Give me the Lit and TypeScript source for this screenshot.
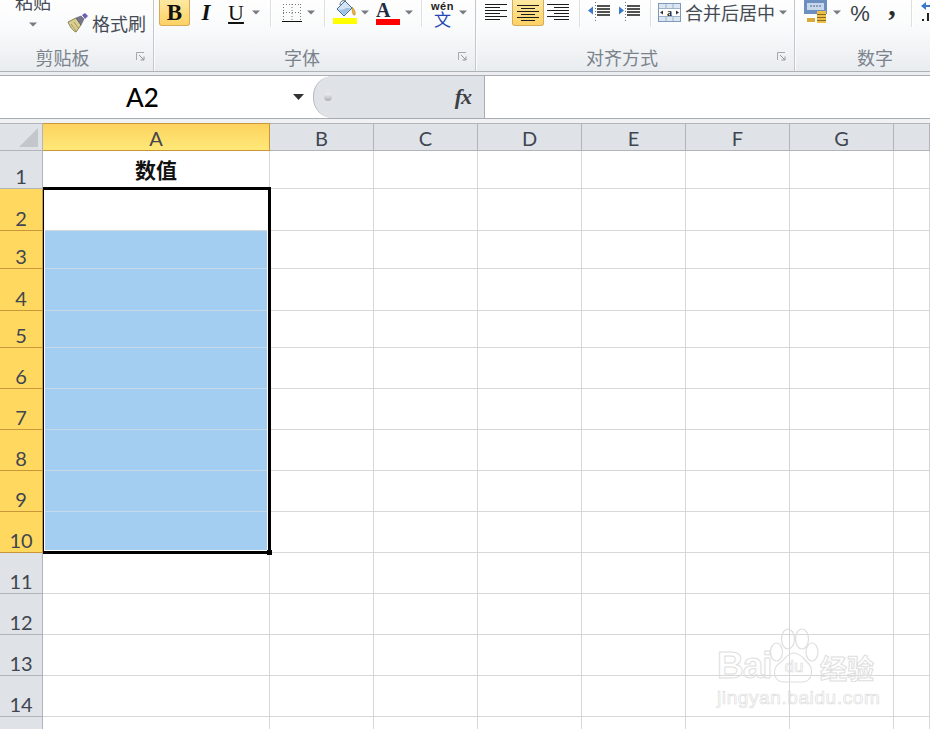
import { LitElement, html, css, svg } from "lit";
import { customElement } from "lit/decorators.js";

const COLS = [{ n: "A", w: 227 }, { n: "B", w: 104 }, { n: "C", w: 104 }, { n: "D", w: 104 }, { n: "E", w: 104 }, { n: "F", w: 104 }, { n: "G", w: 104 }, { n: "", w: 36 }];
const ROWS = [38, 42, 38, 42, 37, 41, 41, 41, 41, 41, 41, 41, 41, 41, 14];

const caret = html`<svg class="caret" width="8" height="5" viewBox="0 0 8 5"><path d="M0 .5h8L4 4.500z" fill="#767b82"/></svg>`;
const launcher = html`<svg class="launcher" width="10" height="10" viewBox="0 0 10 10"><path d="M.5 8V.5H8" fill="none" stroke="#a3a8ae"/><path d="M3 3l5 5M8 4.500V8H4.500" fill="none" stroke="#8f959c" stroke-width="1"/></svg>`;

const lines = (xs: [number, number][]) => svg`${xs.map(([a, b], i) => svg`<rect x="${a}" y="${2 + i * 3}" width="${b - a}" height="1" fill="#1c1c1c"/>`)}`;

const indent = (dir: number) => html`<svg width="23" height="22" viewBox="0 0 23 22"><path d="M9 5h13M9 8h13M9 11h13M9 14h13" stroke="#1a1a1a" stroke-width="1.300"/><path d="M7.500 1v19" stroke="#777" stroke-dasharray="1 2"/><path d="${dir < 0 ? "M0 9.500l5-4v8z" : "M6 9.500l-5-4v8z"}" fill="#3a78cc"/></svg>`;

@customElement("app-root")
export class AppRoot extends LitElement {
  static styles = css`
    :host { display: block; width: 930px; height: 729px; overflow: hidden; position: relative; background: #fff; font-family: "Noto Sans CJK SC", "Liberation Sans", sans-serif; }
    .ribbon { display: flex; height: 71px; background: linear-gradient(#fefefe 0, #f9fafb 30px, #e9ecef 71px); border-bottom: 1px solid #aeb1b6; overflow: hidden; }
    .group { position: relative; display: flex; flex-direction: column; border-right: 1px solid #c4c8cd; box-shadow: 1px 0 0 #fbfcfc; flex: none; box-sizing: border-box; }
    .g1 { width: 154px; } .g2 { width: 322px; } .g3 { width: 319px; } .g4 { flex: 1; border-right: 0; box-shadow: none; }
    .tools { height: 46px; display: flex; align-items: flex-start; }
    .label { height: 25px; line-height: 22px; text-align: center; font-size: 18px; color: #7a828c; }
    .g1 .label { padding-right: 28px; }
    .g2 .label { padding-right: 25px; }
    .g3 .label { padding-right: 26px; }
    .g4 .label { width: 160px; }
    .launcher { position: absolute; right: 7px; bottom: 9px; }
    .paste { width: 66px; margin-top: -11px; display: flex; flex-direction: column; align-items: center; font-size: 18px; line-height: 24px; color: #444b55; }
    .paste .caret { margin-top: 9px; }
    .painter { display: flex; align-items: center; margin-top: 10px; margin-left: 1px; font-size: 18px; line-height: 26px; color: #444b55; gap: 4px; height: 26px; }
    .btn { flex: none; height: 26px; display: flex; align-items: center; justify-content: center; }
    .btn svg { flex: none; }
    .car { height: 24px; }
    .on { background: linear-gradient(#fde8a3, #fdd263); border: 1px solid #d6ab5c; border-top: 0; border-radius: 0 0 3px 3px; box-sizing: border-box; }
    .sep { flex: none; width: 1px; height: 27px; background: #dde0e3; box-shadow: 1px 0 0 #fff; }
    .ser { font-family: "Liberation Serif", serif; font-size: 23px; color: #111; line-height: 26px; }
    .b { font-weight: 700; }
    .i { font-style: italic; font-weight: 700; }
    .u { text-decoration: underline; font-size: 22px; font-weight: 400; }
    .w24 { width: 24px; height: 25px; align-items: flex-start; }
    .fa { flex-direction: column; }
    .fa span.l { font: 700 20px/18px "Liberation Serif", serif; color: #1e2d45; padding-top: 1px; }
    .fa span.bar { display: block; width: 24px; height: 6px; background: #f00; }
    .wen { flex-direction: column; height: 26px; justify-content: flex-start; }
    .wen span.py { font: 700 11px/10px "Liberation Sans", sans-serif; color: #222; letter-spacing: .5px; margin-top: 1px; white-space: nowrap; }
    .wen span.wz { font-size: 17px; line-height: 15px; color: #2445b4; }
    .merge { font-size: 18px; color: #444b55; line-height: 24px; height: 24px; }
    .pct { font-family: "Liberation Sans", sans-serif; font-size: 22px; color: #3a3f46; line-height: 25px; }
    .comma { font: 700 30px/14px "Liberation Serif", serif; color: #2a2a2a; margin-top: -2px; height: 14px; }
    .gap2 { height: 3px; background: #edeef1; }
    .fbar { display: flex; height: 42px; background: #fff; border-top: 1px solid #a9acb2; border-bottom: 1px solid #a9acb2; }
    .name { width: 313px; flex: none; display: flex; align-items: center; box-sizing: border-box; padding-right: 9px; }
    .name span { flex: 1; text-align: center; font: 500 26px/46px Lato, sans-serif; color: #000; padding-right: 8px; }
    .pill { width: 172px; flex: none; box-sizing: border-box; display: flex; align-items: center; justify-content: space-between; background: #dfe2e6; border-left: 1px solid #b4b7bb; border-right: 1px solid #a9acb2; border-radius: 20px 0 0 20px; padding: 0 13px 0 10px; }
    .dot { width: 8px; height: 8px; border-radius: 50%; background: linear-gradient(#f0f1f2, #aeb0b4); }
    .fx { font: italic 700 22px/22px "Liberation Serif", serif; color: #3c3f44; letter-spacing: -1px; }
    .gap3 { height: 4px; background: #f0f1f3; }
    .sheet { position: relative; }
    .row { display: flex; }
    .corner { width: 43px; height: 28px; flex: none; box-sizing: border-box; background: #dfe3e8; border-top: 1px solid #b1b5ba; border-right: 1px solid #b1b5ba; border-bottom: 1px solid #b1b5ba; display: flex; align-items: flex-end; justify-content: flex-end; padding: 0 4px 3px 0; }
    .colh { flex: none; height: 28px; box-sizing: border-box; padding-top: 2px; background: #dfe3e8; border-top: 1px solid #b1b5ba; border-right: 1px solid #b1b5ba; border-bottom: 1px solid #b1b5ba; text-align: center; font: 20px/24px Lato, sans-serif; color: #3f4650; }
    .colh.sel { background: linear-gradient(#fdd35f, #ffe878); border-color: #c9963a; color: #41464e; }
    .rowh { width: 43px; flex: none; box-sizing: border-box; background: #dfe3e8; border-right: 1px solid #b1b5ba; border-bottom: 1px solid #b1b5ba; display: flex; align-items: flex-end; justify-content: center; font: 20px/24px Lato, sans-serif; color: #3f4650; }
    .rowh.sel { background: #ffd860; border-color: #c9963a; }
    .cell { flex: none; box-sizing: border-box; border-right: 1px solid #d5d7da; border-bottom: 1px solid #d5d7da; background: #fff; }
    .cell.blue { background: #a3cef1; border-bottom-color: #c5d9e8; }
    .cell.head { display: flex; align-items: center; justify-content: center; padding-bottom: 1px; font-weight: 700; font-size: 21px; color: #111; }
    .select { position: absolute; left: 43px; top: 64px; width: 228px; height: 367px; box-sizing: border-box; border: 3px solid #000; border-left-width: 1px; box-shadow: inset 0 0 0 1px #fff; pointer-events: none; }
    .handle { position: absolute; right: -4px; bottom: -4px; width: 5px; height: 5px; background: #000; }
    .mark { position: absolute; left: 717px; top: 628px; width: 165px; height: 82px; color: transparent; -webkit-text-stroke: 1px #dedede; }
    .brand { display: flex; align-items: flex-end; height: 56px; }
    .bai { font: 700 37px/36px "Liberation Sans", sans-serif; letter-spacing: -1px; width: 53px; flex: none; }
    .jy { font: 700 27px/32px "Noto Sans CJK SC", sans-serif; margin-left: 50px; white-space: nowrap; }
    .url { font: 19px/22px "Liberation Sans", sans-serif; margin-top: 3px; letter-spacing: .6px; white-space: nowrap; -webkit-text-stroke: .7px #dedede; }
    .paw { position: absolute; left: 53px; top: 0; }
  `;

  private clipboard() {
    return html`<div class="group g1"><div class="tools">
      <div class="paste"><span>粘贴</span>${caret}</div>
      <div class="painter">
        <svg width="21" height="20" viewBox="0 0 21 20"><path d="M1 9l8-4 5 7-5 7C6 18 3 14 1 9z" fill="#d9cd8f" stroke="#8a8150"/><path d="M9 5l5-2 3 3-3 6z" fill="#77778a" stroke="#55556a" stroke-width=".6"/><path d="M15 2l3-2 3 3-3 3z" fill="#6a5fb2"/><path d="M4 11l5 7M7 9l4 6" stroke="#a89c60"/></svg>
        <span>格式刷</span></div>
    </div><div class="label">剪贴板</div>${launcher}</div>`;
  }

  private font() {
    return html`<div class="group g2"><div class="tools">
      <div style="width:5px;flex:none"></div>
      <div class="btn on ser b" style="width:31px">B</div>
      <div class="btn ser i" style="width:32px">I</div>
      <div class="btn ser u" style="width:28px">U</div>
      <div class="btn car" style="width:12px">${caret}</div>
      <div class="sep" style="margin-left:8px"></div>
      <div class="btn" style="width:20px;margin-left:11px"><svg width="20" height="20" viewBox="0 0 20 20"><path d="M1.500 1v16M10 1v16M18.500 1v16M1 1.500h18M1 9.500h18" stroke="#777" stroke-dasharray="1 2" fill="none"/><path d="M0 18.500h20" stroke="#111"/></svg></div>
      <div class="btn car" style="width:18px">${caret}</div>
      <div class="sep" style="margin-left:4px"></div>
      <div class="btn w24" style="margin-left:8px"><svg width="24" height="24" viewBox="0 0 24 24"><path d="M4 9l8-8 7 7-8 8z" fill="#d6e5f4" stroke="#3f6a9c"/><path d="M5 9c2 1 6 1 8-1h5l-7 7z" fill="#9fc0e2"/><path d="M7 5c0-4 3-5 6-4" fill="none" stroke="#55606c"/><path d="M19 7c2 2 4 5 3 8-3 1-3-5-3-8z" fill="#e9b23a" stroke="#a97b1e" stroke-width=".5"/><rect x="0" y="18" width="24" height="6" fill="#ff0"/></svg></div>
      <div class="btn car" style="width:16px">${caret}</div>
      <div class="btn w24 fa" style="margin-left:3px;justify-content:flex-start"><span class="l">A</span><span class="bar"></span></div>
      <div class="btn car" style="width:18px">${caret}</div>
      <div class="sep" style="margin-left:3px"></div>
      <div class="btn wen" style="width:25px;margin-left:8px"><span class="py">wén</span><span class="wz">文</span></div>
      <div class="btn car" style="width:16px">${caret}</div>
    </div><div class="label">字体</div>${launcher}</div>`;
  }

  private align() {
    const ic = (x: [number, number][]) => html`<svg width="22" height="20" viewBox="0 0 22 20">${lines(x)}</svg>`;
    return html`<div class="group g3"><div class="tools">
      <div style="width:9px;flex:none"></div>
      <div class="btn car" style="width:22px">${ic([[0, 22], [0, 15], [0, 22], [0, 15], [0, 22], [0, 15]])}</div>
      <div class="btn on" style="width:32px;margin-left:5px">${ic([[0, 22], [4, 18], [0, 22], [4, 18], [0, 22], [4, 18]])}</div>
      <div class="btn car" style="width:22px;margin-left:3px">${ic([[0, 22], [7, 22], [0, 22], [7, 22], [0, 22], [7, 22]])}</div>
      <div class="sep" style="margin-left:10px"></div>
      <div class="btn car" style="width:23px;margin-left:8px">${indent(-1)}</div>
      <div class="btn car" style="width:23px;margin-left:7px">${indent(1)}</div>
      <div class="sep" style="margin-left:9px"></div>
      <div class="btn car" style="width:23px;margin-left:7px"><svg width="23" height="19" viewBox="0 0 23 19"><rect x=".5" y=".5" width="22" height="18" fill="#dbe6f2" stroke="#7f9ab8"/><rect x="1" y="6" width="21" height="7" fill="#fff"/><path d="M1 5.500h21M1 13.500h21M8 1v4M15 1v4M8 14v4M15 14v4" stroke="#9db3cc"/><path d="M2 9.500l3-2v4zM21 9.500l-3-2v4z" fill="#333"/><text x="11.500" y="12.500" font-size="10" font-weight="700" text-anchor="middle" font-family="Liberation Serif" fill="#222">a</text></svg></div>
      <div class="btn merge" style="margin-left:4px">合并后居中</div>
      <div class="btn car" style="width:16px">${caret}</div>
    </div><div class="label">对齐方式</div>${launcher}</div>`;
  }

  private number() {
    return html`<div class="group g4"><div class="tools">
      <div style="width:9px;flex:none"></div>
      <div class="btn" style="width:23px;height:24px"><svg width="23" height="24" viewBox="0 0 23 24"><rect x="0" y="0" width="23" height="14" fill="#6d8fc0"/><rect x="3" y="3" width="17" height="7" fill="#c7d6ea"/><path d="M6 6h11" stroke="#50689a" stroke-dasharray="2 1"/><rect x="3" y="18" width="8" height="4" fill="#d9a93a"/><path d="M13 11h9v12h-9z" fill="#edbe46"/><path d="M13 14.500h9M13 17.500h9M13 20.500h9" stroke="#8c6a1d"/></svg></div>
      <div class="btn car" style="width:20px">${caret}</div>
      <div class="btn pct" style="width:18px;margin-left:4px">%</div>
      <div class="btn comma" style="width:8px;margin-left:19px">,</div>
      <div class="sep" style="margin-left:15px"></div>
      <div class="btn" style="width:18px;margin-left:9px;height:24px"><svg width="18" height="24" viewBox="0 0 18 24"><path d="M0 6l5-4v3h7v2H5v3z" fill="#3a78cc"/><rect x="1" y="19" width="2" height="2" fill="#222"/><rect x="6" y="13" width="2" height="8" fill="#222"/></svg></div>
    </div><div class="label">数字</div></div>`;
  }

  private sheet() {
    return html`<div class="sheet">
      <div class="row">
        <div class="corner"><svg width="19" height="19" viewBox="0 0 19 19"><path d="M19 0v19H0z" fill="#c3c7cb"/></svg></div>
        ${COLS.map((c, i) => html`<div class="colh ${i === 0 ? "sel" : ""}" style="width:${c.w}px">${c.n}</div>`)}
      </div>
      ${ROWS.map((h, r) => {
        const sel = r >= 1 && r <= 9;
        return html`<div class="row">
          <div class="rowh ${sel ? "sel" : ""}" style="height:${h}px">${r < 14 ? r + 1 : ""}</div>
          ${COLS.map((c, i) => html`<div class="cell ${i === 0 && r >= 2 && r <= 9 ? "blue" : ""} ${i === 0 && r === 0 ? "head" : ""}" style="width:${c.w}px;height:${h}px">${i === 0 && r === 0 ? "数值" : ""}</div>`)}
        </div>`;
      })}
      <div class="select"><div class="handle"></div></div>
    </div>`;
  }

  render() {
    return html`
      <div class="ribbon">${this.clipboard()}${this.font()}${this.align()}${this.number()}</div>
      <div class="gap2"></div>
      <div class="fbar">
        <div class="name"><span>A2</span><svg width="11" height="6" viewBox="0 0 11 6"><path d="M0 0h11L5.500 6z" fill="#333"/></svg></div>
        <div class="pill"><div class="dot"></div><div class="fx">fx</div></div>
      </div>
      <div class="gap3"></div>
      ${this.sheet()}
      <div class="mark">
        <div class="brand"><span class="bai">Bai</span><span class="jy">经验</span></div>
        <svg class="paw" width="50" height="56" viewBox="0 0 50 56" fill="none" stroke="#dedede" stroke-width="1.200"><ellipse cx="18" cy="11" rx="6.500" ry="10"/><ellipse cx="32" cy="11" rx="6.500" ry="10"/><ellipse cx="6.500" cy="24" rx="6" ry="9"/><ellipse cx="42" cy="24" rx="6" ry="9"/><path d="M24 25c6 0 9 5 13 9 7 6 6 20-5 20H14C3 54 1 40 11 34c4-3 7-9 13-9z"/><text x="24" y="44" font-size="17" font-family="Liberation Sans" text-anchor="middle" stroke-width=".7">du</text></svg>
        <div class="url">jingyan.baidu.com</div>
      </div>`;
  }
}
